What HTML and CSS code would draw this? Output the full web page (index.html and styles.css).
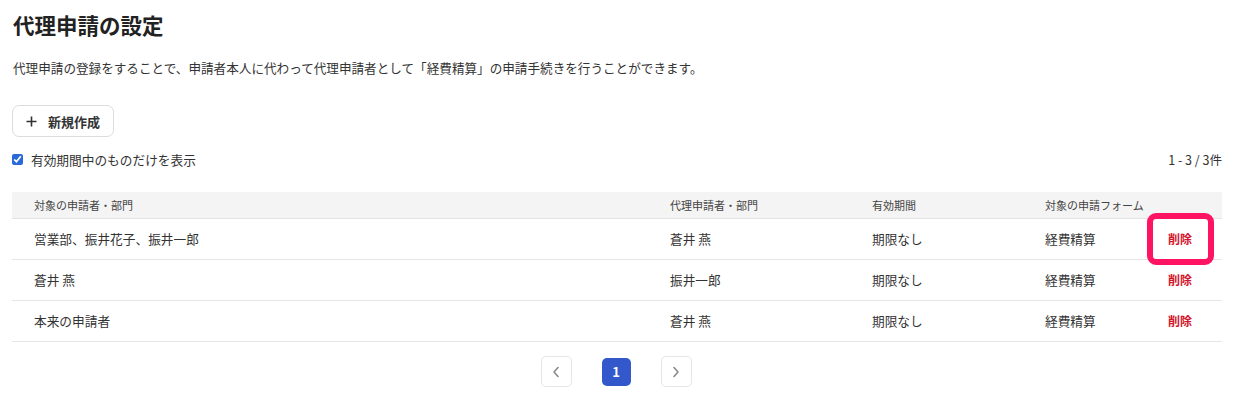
FILE: index.html
```html
<!DOCTYPE html>
<html lang="ja">
<head>
<meta charset="utf-8">
<title>代理申請の設定</title>
<link rel="stylesheet" href="styles.css">
</head>
<body>
<main class="page">
  <h1 class="title">代理申請の設定</h1>
  <p class="desc">代理申請の登録をすることで、申請者本人に代わって代理申請者として「経費精算」の申請手続きを行うことができます。</p>
  <button class="new-btn" type="button">
    <svg class="plus" width="11" height="11" viewBox="0 0 11 11"><path d="M5.5 0.5v10M0.5 5.5h10" stroke="#333" stroke-width="1.6" fill="none"/></svg>
    <span>新規作成</span>
  </button>
  <div class="filter-row">
    <label class="filter"><input type="checkbox" checked><span>有効期間中のものだけを表示</span></label>
    <span class="count">1 - 3 / 3件</span>
  </div>
  <div class="table">
    <div class="row head">
      <div class="cell">対象の申請者・部門</div>
      <div class="cell">代理申請者・部門</div>
      <div class="cell">有効期間</div>
      <div class="cell">対象の申請フォーム</div>
      <div class="cell"></div>
    </div>
    <div class="row">
      <div class="cell">営業部、振井花子、振井一郎</div>
      <div class="cell">蒼井 燕</div>
      <div class="cell">期限なし</div>
      <div class="cell">経費精算</div>
      <div class="cell del-cell"><span class="del">削除</span><span class="highlight"></span></div>
    </div>
    <div class="row">
      <div class="cell">蒼井 燕</div>
      <div class="cell">振井一郎</div>
      <div class="cell">期限なし</div>
      <div class="cell">経費精算</div>
      <div class="cell del-cell"><span class="del">削除</span></div>
    </div>
    <div class="row">
      <div class="cell">本来の申請者</div>
      <div class="cell">蒼井 燕</div>
      <div class="cell">期限なし</div>
      <div class="cell">経費精算</div>
      <div class="cell del-cell"><span class="del">削除</span></div>
    </div>
  </div>
  <nav class="pager">
    <button class="pg nav" type="button" aria-label="前へ">
      <svg width="8" height="12" viewBox="0 0 8 12"><path d="M6 1.5L2 6l4 4.5" stroke="#8a8a8a" stroke-width="1.6" fill="none" stroke-linecap="round" stroke-linejoin="round"/></svg>
    </button>
    <button class="pg current" type="button">1</button>
    <button class="pg nav" type="button" aria-label="次へ">
      <svg width="8" height="12" viewBox="0 0 8 12"><path d="M2 1.5L6 6l-4 4.5" stroke="#8a8a8a" stroke-width="1.6" fill="none" stroke-linecap="round" stroke-linejoin="round"/></svg>
    </button>
  </nav>
</main>
</body>
</html>
```

FILE: styles.css
```css
* { box-sizing: border-box; }
html, body { margin: 0; padding: 0; background: #fff; }
body {
  font-family: "Noto Sans CJK JP", "Noto Sans", "Liberation Sans", sans-serif;
  color: #333;
}
.page {
  width: 1236px;
  padding: 10px 14px 0 12px;
  display: flex;
  flex-direction: column;
}
.title {
  margin: 0 0 0 1px;
  font-size: 21.5px;
  line-height: 30px;
  font-weight: 700;
  color: #222;
}
.desc {
  margin: 18px 0 0 1px;
  font-size: 12.6px;
  line-height: 20px;
  color: #333;
}
.new-btn {
  margin-top: 27px;
  align-self: flex-start;
  width: 102px;
  height: 32px;
  display: flex;
  align-items: center;
  gap: 11px;
  padding: 0 0 0 13px;
  border: 1px solid #dcdcdc;
  border-radius: 7px;
  background: #fff;
  font-family: inherit;
  font-size: 13px;
  font-weight: 700;
  color: #333;
}
.plus { display: block; }
.filter-row {
  margin-top: 12px;
  height: 20px;
  display: flex;
  align-items: center;
  justify-content: space-between;
}
.filter {
  display: flex;
  align-items: center;
  gap: 8px;
  font-size: 12.7px;
  color: #333;
}
.filter input {
  margin: 0;
  width: 11px;
  height: 11px;
  accent-color: #2a6ad8;
}
.count {
  font-size: 12.5px;
  color: #333;
}
.table {
  margin-top: 23px;
  width: 1210px;
  display: flex;
  flex-direction: column;
}
.row {
  display: grid;
  grid-template-columns: 636px 202px 173px 123px 76px;
  height: 41px;
  padding-bottom: 2px;
  border-bottom: 1px solid #e6e6e6;
  align-items: center;
  font-size: 12.7px;
}
.row.head {
  height: 27px;
  padding-bottom: 1px;
  background: #f5f4f4;
  border-bottom: 1px solid #e4e4e4;
  font-size: 11px;
  color: #444;
}
.cell {
  padding-left: 22px;
  white-space: nowrap;
}
.del-cell {
  position: relative;
  height: 100%;
  display: flex;
  align-items: center;
}
.del {
  color: #d3142c;
  font-weight: 700;
  font-size: 12px;
}
.highlight {
  position: absolute;
  left: 1px;
  top: -6px;
  width: 67px;
  height: 52px;
  border: 6px solid #ff1464;
  border-radius: 9px;
}
.pager {
  margin-top: 14px;
  display: flex;
  justify-content: center;
  align-items: center;
  gap: 30px;
  padding-right: 2px;
}
.pg {
  width: 31px;
  height: 31px;
  display: flex;
  align-items: center;
  justify-content: center;
  padding: 0;
  border-radius: 5px;
  font-family: inherit;
}
.pg.nav {
  background: #fff;
  border: 1px solid #e6e6e6;
}
.pg.current {
  width: 29px;
  height: 28px;
  background: #3358cc;
  border: none;
  color: #fff;
  font-weight: 700;
  font-size: 13px;
}
```
